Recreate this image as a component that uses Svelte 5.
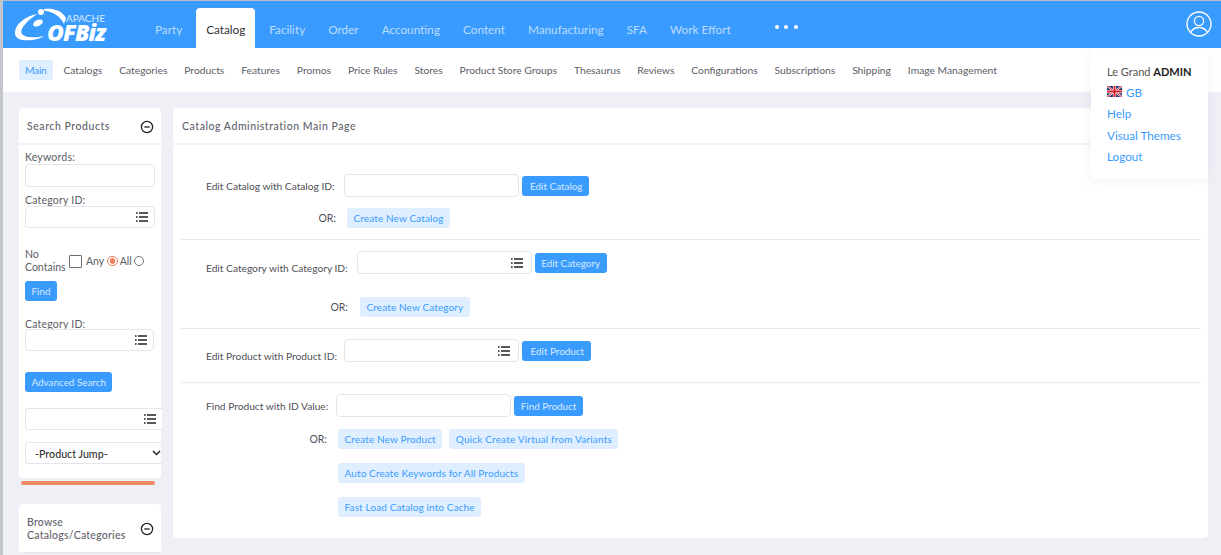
<script>
  const tabs = ['Party','Catalog','Facility','Order','Accounting','Content','Manufacturing','SFA','Work Effort'];
  const subs = ['Main','Catalogs','Categories','Products','Features','Promos','Price Rules','Stores','Product Store Groups','Thesaurus','Reviews','Configurations','Subscriptions','Shipping','Image Management'];
</script>

{#snippet listIcon()}
  <svg class="list" width="12" height="10" viewBox="0 0 12 10" aria-hidden="true">
    <path d="M0 1h1.6M3 1h9M0 5h1.6M3 5h9M0 9h1.6M3 9h9" stroke="#222" stroke-width="1.5" fill="none"/>
  </svg>
{/snippet}

{#snippet minus()}
  <svg width="14" height="14" viewBox="0 0 14 14" aria-hidden="true">
    <circle cx="7" cy="7" r="5.6" fill="none" stroke="#222" stroke-width="1.3"/>
    <path d="M4.3 7h5.4" stroke="#222" stroke-width="1.3"/>
  </svg>
{/snippet}

<div class="page">
  <header class="top">
    <div class="logo">
      <svg class="swoosh" width="70" height="46" viewBox="0 0 70 46" aria-hidden="true">
        <path d="M34 13C23 15 12 23 12 32 12 39 21 40 29 39 34 38.500 38 37 41 35 33 37 22 37 19 33 16 28 25 19 34 13z" fill="#fff"/>
        <ellipse cx="35" cy="22" rx="5.200" ry="3" transform="rotate(-25 35 22)" fill="#fff"/>
        <circle cx="38" cy="11" r="3" fill="#fff"/>
        <path d="M41 8C49 7 59 9 63 17L61 23C58 16 51 11 41 9.500z" fill="#fff"/>
      </svg>
      <div class="wordmark">
        <span class="apache">APACHE</span>
        <span class="ofbiz">OFBiz</span>
      </div>
    </div>
    <nav class="tabs">
      {#each tabs as t}
        <span class="tab" class:active={t === 'Catalog'}>{t}</span>
      {/each}
      <span class="dots"><i></i><i></i><i></i></span>
    </nav>
    <svg class="avatar" width="26" height="26" viewBox="0 0 26 26" aria-hidden="true">
      <circle cx="13" cy="13" r="12" fill="none" stroke="#fff" stroke-width="1.3"/>
      <circle cx="13" cy="10" r="4.6" fill="none" stroke="#fff" stroke-width="1.3"/>
      <path d="M4.500 21.500c2-3.600 5-5 8.500-5s6.500 1.400 8.500 5" fill="none" stroke="#fff" stroke-width="1.3"/>
    </svg>
  </header>

  <nav class="subnav">
    {#each subs as s, i}
      <span class="sub" class:on={i === 0}>{s}</span>
    {/each}
  </nav>

  <aside class="usermenu">
    <div class="who">Le Grand <b>ADMIN</b></div>
    <div class="ulink gb">
      <svg width="15" height="11" viewBox="0 0 60 44" aria-hidden="true">
        <rect width="60" height="44" fill="#1b2f6e"/>
        <path d="M0 0l60 44M60 0L0 44" stroke="#fff" stroke-width="8"/>
        <path d="M0 0l60 44M60 0L0 44" stroke="#d3202c" stroke-width="4"/>
        <path d="M30 0v44M0 22h60" stroke="#fff" stroke-width="13"/>
        <path d="M30 0v44M0 22h60" stroke="#d3202c" stroke-width="8"/>
      </svg>
      GB
    </div>
    <div class="ulink">Help</div>
    <div class="ulink">Visual Themes</div>
    <div class="ulink">Logout</div>
  </aside>

  <div class="body">
    <div class="side">
      <section class="card search">
        <div class="cardhead wide">Search Products {@render minus()}</div>
        <div class="sidebody">
          <label class="f1" for="kw">Keywords:</label>
          <input id="kw" class="inp w130" />
          <span class="f2">Category ID:</span>
          <div class="inp w130 short lk">{@render listIcon()}</div>
          <div class="contains">
            <span class="nc">No Contains</span>
            <span class="box"></span><span class="any">Any</span>
            <span class="radio on"></span><span>All</span>
            <span class="radio"></span>
          </div>
          <div class="findrow"><span class="btn">Find</span></div>
          <span class="f3">Category ID:</span>
          <div class="inp w129 short lk">{@render listIcon()}</div>
          <div class="advrow"><span class="btn">Advanced Search</span></div>
          <div class="inp wfull lk l2">{@render listIcon()}</div>
          <div class="jump">-Product Jump-
            <svg width="9" height="6" viewBox="0 0 9 6" aria-hidden="true"><path d="M1 1l3.500 3.500L8 1" fill="none" stroke="#222" stroke-width="1.500"/></svg>
          </div>
        </div>
      </section>
      <div class="bar"></div>
      <section class="card browse">
        <div class="cardhead"><span>Browse<br/>Catalogs/Categories</span>{@render minus()}</div>
      </section>
    </div>

    <section class="card main">
      <div class="cardhead mainhead wide">Catalog Administration Main Page</div>
      <div class="mainbody">
        <div class="block b1">
          <div class="row">
            <span class="lab">Edit Catalog with Catalog ID:</span>
            <div class="inp mi"></div>
            <span class="btn ind">Edit Catalog</span>
          </div>
          <div class="row or">
            <span class="orl o1">OR:</span>
            <span class="lbtn">Create New Catalog</span>
          </div>
        </div>
        <div class="block b2">
          <div class="row">
            <span class="lab low">Edit Category with Category ID:</span>
            <div class="inp mi lk">{@render listIcon()}</div>
            <span class="btn">Edit Category</span>
          </div>
          <div class="row or orbig">
            <span class="orl o2">OR:</span>
            <span class="lbtn">Create New Category</span>
          </div>
        </div>
        <div class="block b3">
          <div class="row">
            <span class="lab low tight">Edit Product with Product ID:</span>
            <div class="inp mi lk">{@render listIcon()}</div>
            <span class="btn ind">Edit Product</span>
          </div>
        </div>
        <div class="block b4">
          <div class="row">
            <span class="lab find">Find Product with ID Value:</span>
            <div class="inp mi"></div>
            <span class="btn">Find Product</span>
          </div>
          <div class="row or last">
            <span class="orl o3">OR:</span>
            <span class="lbtn">Create New Product</span>
            <span class="lbtn quick">Quick Create Virtual from Variants</span>
          </div>
          <div class="row or indent"><span class="lbtn">Auto Create Keywords for All Products</span></div>
          <div class="row or indent"><span class="lbtn">Fast Load Catalog into Cache</span></div>
        </div>
      </div>
    </section>
  </div>
</div>

<style>
  :global(body) { margin: 0; background: #eff0f6; overflow: hidden; }
  .page {
    position: relative; width: 1221px; height: 555px; overflow: hidden; box-sizing: border-box;
    border-top: 1px solid #b9bcc4; border-left: 3px solid #c3c5cc;
    font-family: Lato, "Noto Sans", sans-serif; font-size: 10.5px; color: #5d5d66; background: #eff0f6;
  }
  .top { height: 47px; background: #3a9bff; display: flex; align-items: flex-end; position: relative; }
  .logo { width: 140.500px; height: 47px; position: relative; flex: none; }
  .swoosh { position: absolute; left: 0; top: 0; }
  .wordmark { display: flex; flex-direction: column; color: #fff; padding: 13px 0 0 44px; }
  .apache { font-size: 10px; margin-left: 19px; line-height: 9px; color: #d9ebff; }
  .ofbiz { font-size: 23px; font-weight: 800; font-style: italic; line-height: 18px; font-family: "Open Sans", sans-serif; letter-spacing: -1px; }
  .tabs { display: flex; height: 40px; align-items: stretch; }
  .tab { color: #bcdcff; font-size: 11.750px; padding: 2px 11.500px 0; display: flex; align-items: center; box-sizing: border-box; }
  .tab.active { background: #fff; color: #333; border-radius: 4px 4px 0 0; width: 59px; padding: 2px 0 0; justify-content: center; margin: 0 2.500px; }
  .dots { margin-left: 32.500px; display: flex; align-items: center; gap: 5.500px; padding-bottom: 3px; }
  .dots i { width: 4px; height: 4px; border-radius: 50%; background: #fff; }
  .avatar { position: absolute; right: 9px; top: 10px; }
  .subnav { height: 44px; background: #fff; display: flex; align-items: center; padding-left: 16px; box-sizing: border-box; }
  .sub { padding: 4px 6px; margin-right: 4.900px; color: #5d5d66; font-size: 10.300px; border-radius: 3px; line-height: 12px; }
  .sub.on { background: #e0efff; color: #3a9bff; letter-spacing: -.3px; }
  .usermenu {
    position: absolute; top: 48px; left: 1088px; width: 117px; height: 130px; background: #fff; box-sizing: border-box;
    padding: 16px 16px 0; box-shadow: 0 2px 14px rgba(100,105,130,.08); border-radius: 0 0 4px 4px; font-size: 11.700px; z-index: 3;
  }
  .who { height: 21px; color: #555; font-size: 11px; line-height: 14px; white-space: nowrap; }
  .who b { color: #222; }
  .ulink { height: 21.500px; color: #3a9bff; line-height: 18px; }
  .gb { display: flex; align-items: center; gap: 4px; height: 21px; margin-top: -5px; margin-bottom: 2px; }
  .body { display: flex; padding: 16px 13px 0 16px; gap: 12px; align-items: flex-start; }
  .side { width: 142px; flex: none; }
  .card { background: #fff; border-radius: 4px; }
  .cardhead { height: 35px; padding: 2px 7px 0 8px; border-bottom: 2px solid #f1f2f6; display: flex; align-items: center; justify-content: space-between; font-weight: 500; color: #62626c; font-size: 10.500px; line-height: 13px; letter-spacing: .25px; box-sizing: content-box; }
  .wide { letter-spacing: .55px; height: 33px; }
  .sidebody { padding: 6px 6px 0; display: flex; flex-direction: column; letter-spacing: .2px; }
  .search { height: 370px; }
  .inp { box-sizing: border-box; border: 1px solid #e4e5eb; border-radius: 4px; height: 23px; background: #fff; display: flex; align-items: center; justify-content: flex-end; flex: none; padding: 0; }
  .short { height: 22px; }
  .w130 { width: 130px; padding-right: 6px; }
  .w129 { width: 129px; padding-right: 6px; }
  .wfull { width: 137px; padding-right: 6px; margin-top: 16px; height: 22px; border-right: none; border-radius: 4px 0 0 4px; }
  .f1 { height: 13px; line-height: 13px; }
  .f2 { height: 12px; line-height: 13px; margin-top: 7px; }
  .f3 { height: 12px; line-height: 15px; margin-top: 16px; }
  .contains { display: flex; align-items: center; margin-top: 20px; height: 26px; gap: 2px; white-space: nowrap; letter-spacing: 0; }
  .nc { white-space: normal; width: 42px; line-height: 13px; }
  .box { width: 11px; height: 11px; border: 1px solid #6a6a72; border-radius: 1px; margin-right: 2px; flex: none; }
  .any { margin-right: 1px; }
  .radio { width: 8.500px; height: 8.500px; border: 1.500px solid #777; border-radius: 50%; flex: none; background: #fff; }
  .radio.on { border-color: #ee7f58; background: radial-gradient(circle, #ee7f58 0 2.500px, #fff 3px); }
  .findrow { margin-top: 7px; }
  .advrow { margin-top: 21px; }
  .btn { display: inline-flex; align-items: center; justify-content: center; height: 20px; padding: 0 6.500px; background: #3a9bff; color: #d6e9ff; border-radius: 3px; font-size: 9.900px; white-space: nowrap; letter-spacing: 0; box-sizing: border-box; flex: none; }
  .btn.ind { padding-left: 8.500px; }
  .jump { margin-top: 12px; height: 22px; width: 137px; box-sizing: border-box; border: 1px solid #e4e5eb; border-right: none; border-radius: 4px 0 0 4px; display: flex; align-items: center; justify-content: space-between; padding: 0 1px 0 9px; color: #333; font-size: 10.700px; letter-spacing: 0; font-weight: 500; flex: none; }
  .bar { height: 4px; width: 134px; margin: 3px 0 0 2px; background: #ee8a63; border-radius: 2px; }
  .browse { margin-top: 19px; }
  .browse .cardhead { height: 47px; padding-top: 1px; border-bottom: 1px solid #e8e9ee; }
  .main { flex: 1; height: 430px; }
  .mainhead { justify-content: flex-start; padding-left: 9px; }
  .mainbody { padding: 0 7px 0 8px; }
  .block { padding-left: 25px; border-bottom: 1px solid #e9eaee; box-sizing: border-box; }
  .block:last-child { border-bottom: 0; }
  .b1 { height: 95px; padding-top: 29px; }
  .b2 { height: 89px; padding-top: 11px; }
  .b3 { height: 54px; padding-top: 10px; }
  .b4 { padding-top: 11px; }
  .row { display: flex; align-items: center; gap: 3px; min-height: 23px; }
  .lab { color: #4f4f58; font-size: 10.200px; margin-right: 6px; white-space: nowrap; }
  .find { margin-right: 5px; }
  .low { transform: translateY(5px); }
  .tight { margin-right: 4px; }
  .mi { width: 175px; padding-right: 8px; }
  .or { margin-top: 9px; }
  .or.last { margin-top: 10px; }
  .orbig { margin-top: 21px; }
  .orl { color: #4f4f58; text-align: right; flex: none; }
  .o1 { width: 130px; margin-right: 8px; }
  .o2 { width: 142px; margin-right: 9px; }
  .o3 { width: 121px; margin-right: 8px; }
  .indent { padding-left: 132px; margin-top: 11px; }
  .lbtn { display: inline-flex; align-items: center; height: 20px; padding: 0 6.500px; background: #e0efff; color: #3a9bff; border-radius: 3px; font-size: 10px; white-space: nowrap; letter-spacing: .12px; margin-right: 4px; }
  .lbtn.quick { letter-spacing: .18px; }
  .list { display: block; }
</style>
